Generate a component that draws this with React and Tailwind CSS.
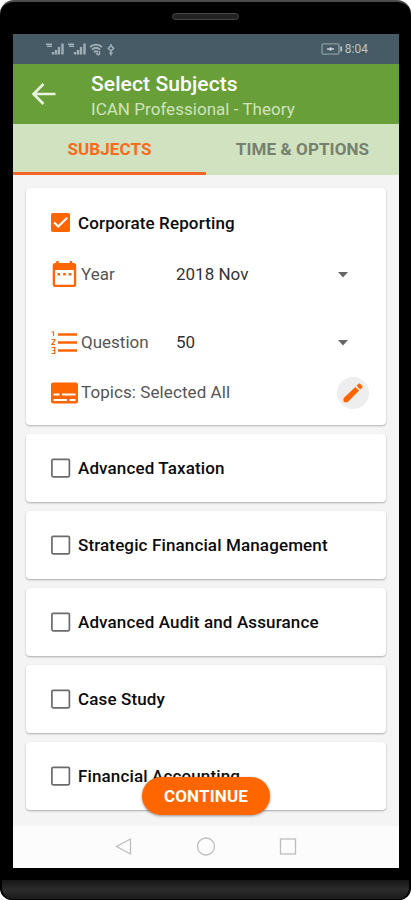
import React, { useState } from 'react';

const subjects = [
  { id: 1, name: 'Advanced Taxation' },
  { id: 2, name: 'Strategic Financial Management' },
  { id: 3, name: 'Advanced Audit and Assurance' },
  { id: 4, name: 'Case Study' },
  { id: 5, name: 'Financial Accounting' }
];

function Signal() {
  return (
    <svg className="w-[19px] h-[14px]" viewBox="0 0 19 14" fill="none">
      <path d="M0 2.300h6M1 4.300h5" stroke="#9fafb5" strokeWidth="1.500" />
      <path d="M7 12.500V10M10 12.500V8M13 12.500V5M16.500 12.500V1.500" stroke="#a0afb5" strokeWidth="2.400" />
    </svg>
  );
}

function StatusBar() {
  return (
    <div className="h-[30px] bg-[#465b65] flex items-center justify-between pl-[33px] pr-[31px]">
      <div className="flex items-center">
        <Signal />
        <span className="w-[3px]" />
        <Signal />
        <svg className="ml-[2px] w-[14px] h-[13px]" viewBox="0 0 14 13" fill="none" stroke="#a0afb5">
          <path d="M1 4C4.500 .8 9.500 .8 13 4M3 6.700c2.500-2.500 5.500-2.500 8 0M5 9.200c1.300-1.200 2.700-1.200 4 0" strokeWidth="1.900" />
          <path d="M7 10.500l3 1.500M10.500 8v4" strokeWidth="1.500" />
        </svg>
        <svg className="ml-[3px] w-[10px] h-[13px]" viewBox="0 0 10 13" fill="none" stroke="#a0afb5">
          <path d="M5 1v1.500M5 8v4.500M2.300 5.300L5 2.600l2.700 2.700L5 8zM3.300 10h3.400" strokeWidth="1.500" />
        </svg>
      </div>
      <div className="flex items-center">
        <svg className="w-[22px] h-[12px]" viewBox="0 0 22 12" fill="none">
          <rect x="1" y="0.800" width="17" height="10.400" rx="1.500" stroke="#8a9ba2" strokeWidth="1.300" />
          <path d="M6 6h7M9.500 4.200v3.600" stroke="#c9d4d8" strokeWidth="1.600" />
          <path d="M20.200 3.500v5" stroke="#b5c1c6" strokeWidth="1.800" />
        </svg>
        <span className="ml-[2px] text-[12px] leading-none text-[#bcc8cd]">8:04</span>
      </div>
    </div>
  );
}

function Checkbox({ checked }) {
  return (
    <svg className="w-[20px] h-[20px]" viewBox="0 0 20 20" fill="none">
      {checked ? (
        <>
          <rect x="0" y="0" width="19" height="19" rx="1.800" fill="#ff6600" />
          <path d="M3.200 9.500l4 4L16.200 4.700" stroke="#fff" strokeWidth="2.100" />
        </>
      ) : (
        <rect x="0.900" y="1.300" width="17.500" height="17.500" rx="1.200" stroke="#6b6b6b" strokeWidth="1.700" />
      )}
    </svg>
  );
}

function SubjectLabel({ name, checked, onToggle }) {
  return (
    <button onClick={onToggle} className="flex items-center">
      <Checkbox checked={checked} />
      <span className="ml-[7px] text-[17px] leading-5 tracking-[0.13px] font-medium text-[#0c0c0c] whitespace-nowrap">
        {name}
      </span>
    </button>
  );
}

function Caret() {
  return (
    <svg className="w-[10px] h-[6px]" viewBox="0 0 10 6">
      <path d="M0 0h10L5 5.500z" fill="#666" />
    </svg>
  );
}

function CalendarIcon() {
  return (
    <svg className="w-[28px] h-[28px]" viewBox="0.800 1 28 28" fill="#ff6600">
      <path d="M5 3h1V1h2.500v2h11V1H22v2h1.500Q26 3 26 5.500v19q0 2.500-2.500 2.500H5q-2.500 0-2.500-2.500v-19Q2.500 3 5 3zM4.800 10v14.700h18.900V10z" />
      <path d="M7.300 13h2.600v2.400H7.300zM13 13h2.600v2.400H13zM18.500 13h2.600v2.400h-2.600z" />
    </svg>
  );
}

function NumberedListIcon() {
  return (
    <svg className="w-[28px] h-[24px]" viewBox="0.500 0.500 28 24" fill="none" stroke="#ff6600">
      <path d="M7.500 4H26.500M7.500 12H26.500M7.500 20H26.500" strokeWidth="2.600" />
      <path d="M1 1.500h2v4M1 9h3.200v1.200L1.300 14h3.200M1 17h3.200v6H1M2 20h2.200" strokeWidth="1.200" />
    </svg>
  );
}

function TopicsIcon() {
  return (
    <svg className="w-[28px] h-[22px]" viewBox="0.500 0 28 22">
      <rect x="0.500" y="0.500" width="27" height="21" rx="2.200" fill="#ff6600" />
      <path d="M3 12.500h6M11.500 12.500H25M3 18h13.500M19 18h6" stroke="#fff" strokeWidth="2.200" />
    </svg>
  );
}

export default function App() {
  const [selected, setSelected] = useState([]);

  const toggle = (id) => {
    setSelected((prev) => (prev.includes(id) ? prev.filter((s) => s !== id) : [...prev, id]));
  };

  return (
    <div className="w-[411px] h-[900px] overflow-hidden bg-white font-['Roboto',sans-serif]">
      <div className="h-full flex flex-col bg-black rounded-t-[14px] rounded-b-[12px] border-t-2 border-[#4b4b4b] overflow-hidden">
        {/* Speaker */}
        <div className="h-[32px] shrink-0 flex justify-center pt-[11px]">
          <div className="w-[67px] h-[7px] rounded-full bg-[#222] border border-[#464646]" />
        </div>

        <div className="relative ml-[13px] mr-[12px] h-[834px] shrink-0 flex flex-col bg-[#f4f4f4]">
          <StatusBar />

          {/* Header */}
          <div className="h-[60px] bg-[#689f38] flex items-center pl-[18px]">
            <svg className="w-[26px] h-[24px]" viewBox="0 0 26 24" fill="none" stroke="#e9f4df" strokeWidth="2.600">
              <path d="M12.500 2L2.500 12L12.500 22M2.500 12H24.500" />
            </svg>
            <div className="ml-[34px] pt-[3px]">
              <h1 className="text-[21px] leading-[26px] tracking-[0.1px] font-medium text-white whitespace-nowrap">Select Subjects</h1>
              <p className="text-[17px] leading-[24px] tracking-[0.03px] text-[#cfe3be] whitespace-nowrap">ICAN Professional - Theory</p>
            </div>
          </div>

          {/* Tabs */}
          <div className="h-[51px] grid grid-cols-2 bg-[#d1e2c1] text-[17px] tracking-[0.1px] font-bold">
            <button className="border-b-[3px] border-[#f26522] text-[#f96a1b] pt-[3px]">SUBJECTS</button>
            <button className="text-[#75816e] whitespace-nowrap">TIME &amp; OPTIONS</button>
          </div>

          {/* Subject list */}
          <div className="flex-1 px-[13px] pt-[13px] flex flex-col gap-[9px]">
            <div className="h-[237px] shrink-0 bg-white rounded-[4px] shadow-[0_1px_2px_rgba(0,0,0,0.28)] pl-[25px] pr-[17px]">
              <div className="h-[69px] flex items-center">
                <SubjectLabel name="Corporate Reporting" checked />
              </div>
              <div className="h-[35px] flex items-center text-[17px] text-[#555]">
                <CalendarIcon />
                <span className="ml-[2px] w-[95px]">Year</span>
                <span className="flex-1 text-[#333]">2018 Nov</span>
                <span className="mr-[21px]"><Caret /></span>
              </div>
              <div className="mt-[34px] h-[34px] flex items-center text-[17px] text-[#555]">
                <NumberedListIcon />
                <span className="ml-[2px] w-[95px]">Question</span>
                <span className="flex-1 text-[#333]">50</span>
                <span className="mr-[21px]"><Caret /></span>
              </div>
              <div className="mt-[16px] h-[34px] flex items-center text-[17px] text-[#555]">
                <TopicsIcon />
                <span className="ml-[2px] flex-1 tracking-[0.08px]">Topics: Selected All</span>
                <button className="w-[32px] h-[32px] rounded-full bg-[#eeeeee] flex items-center justify-center">
                  <svg className="w-[20px] h-[20px]" viewBox="0 0 20 20" fill="#ff6600">
                    <path d="M.5 15.200L12.300 4l3.800 3.600L4.600 19.200H1.500q-1 0-1-1zM13.500 2.800L15.600.8q.7-.7 1.400 0L19.300 3q.7.800 0 1.500l-2 2z" />
                  </svg>
                </button>
              </div>
            </div>

            {subjects.map((subject) => (
              <div
                key={subject.id}
                className="h-[68px] shrink-0 bg-white rounded-[4px] shadow-[0_1px_2px_rgba(0,0,0,0.3)] flex items-center pl-[25px]"
              >
                <SubjectLabel
                  name={subject.name}
                  checked={selected.includes(subject.id)}
                  onToggle={() => toggle(subject.id)}
                />
              </div>
            ))}
          </div>

          {/* Navigation bar */}
          <div className="h-[42px] shrink-0 bg-[#fcfcfc] flex items-center pl-[102px]">
            <svg className="w-[184px] h-[20px]" viewBox="0 0 184 20" fill="none" stroke="#bdbdbd" strokeWidth="1.300">
              <path d="M15.500 2v15L1.500 9.500z" />
              <circle cx="91" cy="9.500" r="8.500" />
              <rect x="165.500" y="2" width="15" height="15" />
            </svg>
          </div>

          <button className="absolute left-[129px] top-[743px] w-[128px] h-[38px] pt-[1px] rounded-full bg-[#ff6600] text-white text-[17px] tracking-[0.15px] font-bold shadow-[0_1px_3px_rgba(0,0,0,0.4)]">
            CONTINUE
          </button>
        </div>

        {/* Bottom bezel */}
        <div className="mt-[12px] flex-1 bg-linear-to-b from-[#151515] via-[#2c2c2c] to-[#1c1c1c] rounded-b-[12px] border-x-2 border-b border-black" />
      </div>
    </div>
  );
}
